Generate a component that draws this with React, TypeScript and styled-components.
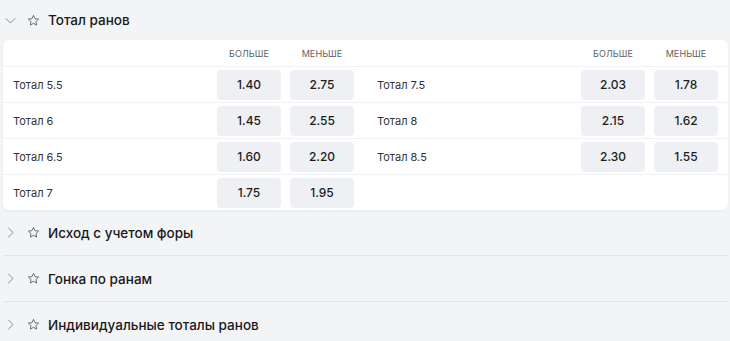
import React from 'react'
import styled, { createGlobalStyle } from 'styled-components'

type Market = { label: string; over: string; under: string }

const leftMarkets: Market[] = [
  { label: 'Тотал 5.5', over: '1.40', under: '2.75' },
  { label: 'Тотал 6', over: '1.45', under: '2.55' },
  { label: 'Тотал 6.5', over: '1.60', under: '2.20' },
  { label: 'Тотал 7', over: '1.75', under: '1.95' },
]

const rightMarkets: Market[] = [
  { label: 'Тотал 7.5', over: '2.03', under: '1.78' },
  { label: 'Тотал 8', over: '2.15', under: '1.62' },
  { label: 'Тотал 8.5', over: '2.30', under: '1.55' },
]

const collapsed = ['Исход с учетом форы', 'Гонка по ранам', 'Индивидуальные тоталы ранов']

const GlobalStyle = createGlobalStyle`
  html, body {
    margin: 0;
    padding: 0;
    background: #f3f4f6;
    font-family: Inter, "Noto Sans", sans-serif;
    color: #1c1c1e;
  }
`

const Chevron = ({ open }: { open?: boolean }) => (
  <svg width="11" height="11" viewBox="0 0 11 11" fill="none">
    <path
      d={open ? 'M1 3.5 L5.5 8 L10 3.5' : 'M3.5 1 L8 5.5 L3.5 10'}
      stroke="#8a8d93"
      strokeWidth="1"
      strokeLinecap="round"
      strokeLinejoin="round"
    />
  </svg>
)

const Star = () => (
  <svg width="13" height="13" viewBox="0 0 24 24" fill="none">
    <path
      d="M12 2.6l2.9 6 6.5.8-4.8 4.5 1.2 6.5L12 17.2l-5.8 3.2 1.2-6.5L2.6 9.4l6.5-.8z"
      stroke="#55585e"
      strokeWidth="1.6"
      strokeLinejoin="round"
    />
  </svg>
)

const Cell = ({ m }: { m?: Market }) => (
  <Half>
    {m && (
      <>
        <Label>{m.label}</Label>
        <Odd>{m.over}</Odd>
        <Odd>{m.under}</Odd>
      </>
    )}
  </Half>
)

const App: React.FC = () => {
  return (
    <Page>
      <GlobalStyle />
      <SectionHeader $first>
        <ChevronSlot>
          <Chevron open />
        </ChevronSlot>
        <Star />
        <Title>Тотал ранов</Title>
      </SectionHeader>
      <Card>
        <HeadRow>
          <Half>
            <span />
            <ColTitle>Больше</ColTitle>
            <ColTitle>Меньше</ColTitle>
          </Half>
          <Half>
            <span />
            <ColTitle>Больше</ColTitle>
            <ColTitle>Меньше</ColTitle>
          </Half>
        </HeadRow>
        {leftMarkets.map((m, i) => (
          <Row key={m.label} $last={i === leftMarkets.length - 1}>
            <Cell m={m} />
            <Cell m={rightMarkets[i]} />
          </Row>
        ))}
      </Card>
      {collapsed.map((t, i) => (
        <SectionHeader key={t} $divider={i < collapsed.length - 1}>
          <ChevronSlot>
            <Chevron />
          </ChevronSlot>
          <Star />
          <Title>{t}</Title>
        </SectionHeader>
      ))}
    </Page>
  )
}

const Page = styled.div`
  padding: 0 2px 0 3px;
`

const SectionHeader = styled.div<{ $first?: boolean; $divider?: boolean }>`
  display: flex;
  align-items: center;
  height: ${(p) => (p.$first ? '40px' : '45px')};
  border-bottom: ${(p) => (p.$divider ? '1px solid #e2e4e8' : 'none')};
`

const ChevronSlot = styled.div`
  width: 24px;
  display: flex;
  align-items: center;
  padding-left: 2px;
  box-sizing: border-box;
`

const Title = styled.span`
  margin-left: 8px;
  font-size: 13.5px;
  font-weight: 500;
  color: #18191b;
`

const Card = styled.div`
  background: #fff;
  border-radius: 6px;
  box-shadow: 0 1px 3px rgba(0, 0, 0, 0.05);
`

const HeadRow = styled.div`
  display: flex;
  gap: 23px;
  height: 26px;
  padding: 0 10px;
  border-bottom: 1px solid #eef0f2;
`

const Row = styled.div<{ $last?: boolean }>`
  display: flex;
  gap: 23px;
  height: 35px;
  padding: 0 10px;
  border-bottom: ${(p) => (p.$last ? 'none' : '1px solid #eef0f2')};
`

const Half = styled.div`
  flex: 1;
  display: grid;
  grid-template-columns: 1fr 64px 64px;
  column-gap: 9px;
  align-items: center;
`

const ColTitle = styled.span`
  text-align: center;
  font-size: 9px;
  text-transform: uppercase;
  color: #5c5f65;
  letter-spacing: 0.1px;
`

const Label = styled.span`
  font-size: 11px;
  color: #303236;
`

const Odd = styled.button`
  height: 30px;
  border: none;
  border-radius: 4px;
  background: #eef0f3;
  font-family: Inter, "Noto Sans", sans-serif;
  font-size: 12px;
  font-weight: 500;
  color: #1c1c1e;
  cursor: pointer;
  padding: 0;
`

export default App
